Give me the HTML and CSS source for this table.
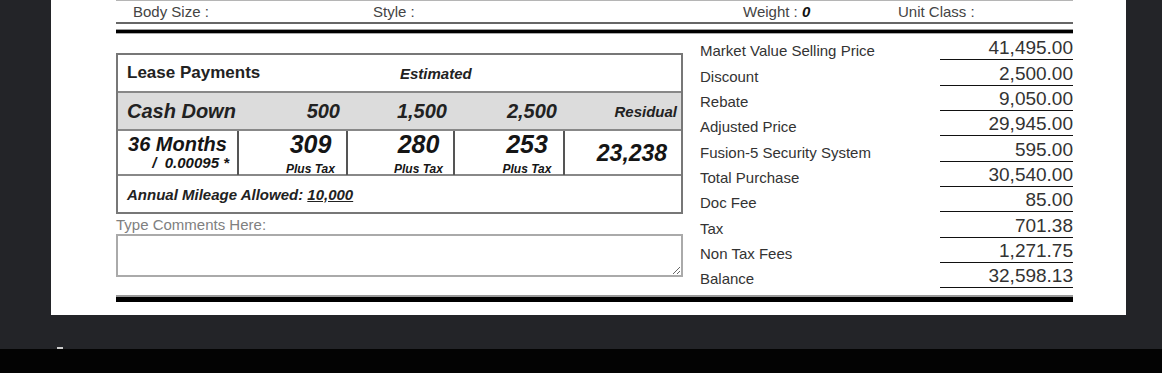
FILE: index.html
```html
<!DOCTYPE html>
<html>
<head>
<meta charset="utf-8">
<title>Deal Sheet</title>
<link rel="stylesheet" href="styles.css">
</head>
<body>
<div class="screen">
  <div class="sheet">
    <div class="form">
      <div class="specs">
        <span>Body Size :</span>
        <span>Style :</span>
        <span>Weight : <b>0</b></span>
        <span>Unit Class :</span>
      </div>
      <div class="rule-top"></div>
      <div class="main">
        <div class="left">
          <div class="lease">
            <div class="lease-title">
              <span class="lt-name">Lease Payments</span>
              <span class="lt-est">Estimated</span>
            </div>
            <div class="lease-grid head">
              <div class="cell first">Cash Down</div>
              <div class="cell">500</div>
              <div class="cell">1,500</div>
              <div class="cell">2,500</div>
              <div class="cell small">Residual</div>
            </div>
            <div class="lease-grid data">
              <div class="cell term">
                <div class="term-main">36 Months</div>
                <div class="term-rate">/&nbsp;&nbsp;0.00095 *</div>
              </div>
              <div class="cell pay">
                <div class="amt">309</div>
                <div class="tax">Plus Tax</div>
              </div>
              <div class="cell pay">
                <div class="amt">280</div>
                <div class="tax">Plus Tax</div>
              </div>
              <div class="cell pay">
                <div class="amt">253</div>
                <div class="tax">Plus Tax</div>
              </div>
              <div class="cell resid">23,238</div>
            </div>
            <div class="mileage">Annual Mileage Allowed:&nbsp;<u>10,000</u></div>
          </div>
          <div class="comments-label">Type Comments Here:</div>
          <textarea class="comments"></textarea>
        </div>
        <div class="right">
          <div class="row"><span class="lbl">Market Value Selling Price</span><span class="val">41,495.00</span></div>
          <div class="row"><span class="lbl">Discount</span><span class="val">2,500.00</span></div>
          <div class="row"><span class="lbl">Rebate</span><span class="val">9,050.00</span></div>
          <div class="row"><span class="lbl">Adjusted Price</span><span class="val">29,945.00</span></div>
          <div class="row"><span class="lbl">Fusion-5 Security System</span><span class="val">595.00</span></div>
          <div class="row"><span class="lbl">Total Purchase</span><span class="val">30,540.00</span></div>
          <div class="row"><span class="lbl">Doc Fee</span><span class="val">85.00</span></div>
          <div class="row"><span class="lbl">Tax</span><span class="val">701.38</span></div>
          <div class="row"><span class="lbl">Non Tax Fees</span><span class="val">1,271.75</span></div>
          <div class="row"><span class="lbl">Balance</span><span class="val">32,598.13</span></div>
        </div>
      </div>
      <div class="rule-bottom"></div>
    </div>
  </div>
  <div class="under"><span class="tick"></span></div>
  <div class="base"></div>
</div>
</body>
</html>
```

FILE: styles.css
```css
* { box-sizing: border-box; }
html, body { margin: 0; padding: 0; }
body {
  background: #232428;
  font-family: "Liberation Sans", Arial, sans-serif;
  color: #333;
  width: 1162px;
  height: 373px;
  overflow: hidden;
}
.screen { display: flex; flex-direction: column; height: 373px; }
.sheet {
  flex: none;
  margin-left: 51px;
  width: 1075px;
  height: 315px;
  background: #fff;
  padding-left: 65px;
}
.form { width: 957px; }

.specs {
  display: grid;
  grid-template-columns: 240px 370px 155px 1fr;
  padding-left: 17px;
  height: 24px;
  border-top: 1px solid #b5b5b5;
  border-bottom: 2px solid #666;
  font-size: 15px;
  line-height: 21px;
  color: #444;
}
.specs b { font-style: italic; color: #111; }

.rule-top {
  margin-top: 5px;
  height: 5px;
  border-top: 1px solid #999;
  border-bottom: 1px solid #aaa;
  background: #000;
}

.main { display: flex; gap: 17px; }
.left { width: 567px; flex: none; padding-top: 19px; }

.lease { border: 2px solid #777; }
.lease-title {
  height: 38px;
  border-bottom: 2px solid #888;
  display: flex;
  align-items: center;
  padding-left: 9px;
  font-size: 17px;
  font-weight: bold;
  color: #222;
}
.lt-name { width: 273px; }
.lt-est { font-size: 15px; font-style: italic; }

.lease-grid {
  display: grid;
  grid-template-columns: 119px 109px 107px 110px 1fr;
}
.head {
  height: 38px;
  background: #dcdcdc;
  border-bottom: 2px solid #888;
  font-weight: bold;
  font-style: italic;
  font-size: 20px;
  color: #222;
}
.head .cell {
  display: flex;
  align-items: center;
  justify-content: flex-end;
  padding-right: 6px;
  white-space: nowrap;
}
.head .first { justify-content: flex-start; padding-left: 9px; padding-right: 0; }
.head .small { font-size: 15px; padding-right: 4px; }

.data {
  height: 45px;
  border-bottom: 2px solid #888;
  font-weight: bold;
  font-style: italic;
  color: #151515;
}
.data .cell + .cell { border-left: 2px solid #555; }
.term { padding-top: 3px; white-space: nowrap; }
.term-main { font-size: 20px; line-height: 20px; text-align: center; }
.term-rate {
  font-size: 15px;
  line-height: 14px;
  text-align: right;
  padding-right: 8px;
  margin-top: 2px;
}
.pay { padding: 2px 0 0 36px; text-align: center; }
.amt { font-size: 25px; line-height: 22px; }
.tax { font-size: 12px; line-height: 12px; margin-top: 8px; }
.resid {
  display: flex;
  align-items: center;
  justify-content: center;
  padding-left: 18px;
  font-size: 23px;
}

.mileage {
  height: 36px;
  display: flex;
  align-items: center;
  padding-left: 9px;
  font-size: 15px;
  font-weight: bold;
  font-style: italic;
  color: #222;
}

.comments-label {
  font-size: 15px;
  line-height: 17px;
  margin-top: 2px;
  color: #808080;
}
.comments {
  display: block;
  width: 567px;
  height: 43px;
  margin: 1px 0 0 0;
  padding: 0;
  border: 2px solid #aaa;
  background: #fff;
  font: inherit;
  resize: both;
}

.right { width: 373px; flex: none; padding-top: 1px; }
.row {
  height: 25.33px;
  display: flex;
  justify-content: space-between;
  align-items: flex-end;
}
.lbl { font-size: 15px; line-height: 18px; color: #333; }
.val {
  width: 133px;
  text-align: right;
  font-size: 19px;
  line-height: 22px;
  border-bottom: 1px solid #111;
  color: #333;
}

.rule-bottom {
  margin-top: 7px;
  height: 7px;
  border-top: 2px solid #999;
  background: #000;
}

.under { flex: none; height: 34px; display: flex; align-items: flex-end; }
.tick { width: 6px; height: 2px; background: #ccc; margin-left: 57px; }
.base { flex: 1; background: #030303; }
```
